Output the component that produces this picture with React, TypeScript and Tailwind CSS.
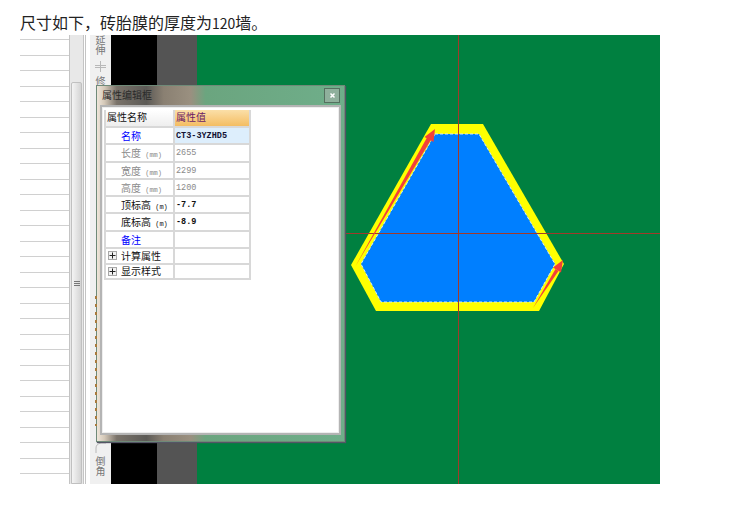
const rows = [
  { n: "名称", u: "", v: "CT3-3YZHD5", c: "text-[#0000ff]", vc: "font-bold text-[#111133]", bg: "bg-[#ddeefc]" },
  { n: "长度", u: "(mm)", v: "2655", c: "text-[#8a8a8a]", vc: "text-[#8a8a8a]", bg: "bg-white" },
  { n: "宽度", u: "(mm)", v: "2299", c: "text-[#8a8a8a]", vc: "text-[#8a8a8a]", bg: "bg-white" },
  { n: "高度", u: "(mm)", v: "1200", c: "text-[#8a8a8a]", vc: "text-[#8a8a8a]", bg: "bg-white" },
  { n: "顶标高", u: "(m)", v: "-7.7", c: "text-[#111111]", vc: "font-bold text-[#111111]", bg: "bg-white" },
  { n: "底标高", u: "(m)", v: "-8.9", c: "text-[#111111]", vc: "font-bold text-[#111111]", bg: "bg-white" },
  { n: "备注", u: "", v: "", c: "text-[#0000ff]", vc: "", bg: "bg-white" },
];

function Plus() {
  return (
    <span className="flex h-[9px] w-[9px] items-center justify-center border border-[#a8a8a8] bg-[#f2f2f2]">
      <svg width="7" height="7" viewBox="0 0 7 7">
        <path d="M0.5 3.5H6.5M3.5 0.5V6.5" stroke="#222" strokeWidth="1" />
      </svg>
    </span>
  );
}

function Row({ n, u, v, c, vc, bg }: { n: string; u: string; v: string; c: string; vc: string; bg: string }) {
  return (
    <div className="flex h-[17.3px] border-b-2 border-[#d8d8d8]">
      <div className={`w-[69px] shrink-0 border-r-2 border-[#d8d8d8] pl-[15px] text-[10px] leading-[16px] ${c}`}>
        {n}
        {u && <span className="font-['Liberation_Mono',monospace] text-[7px]"> {u}</span>}
      </div>
      <div className={`flex-1 pl-[1px] font-['Liberation_Mono',monospace] text-[8.5px] leading-[16px] ${vc} ${bg}`}>{v}</div>
    </div>
  );
}

function Expand({ n }: { n: string }) {
  return (
    <div className="flex h-[15.5px] border-b-2 border-[#d8d8d8]">
      <div className="flex w-[69px] shrink-0 items-center border-r-2 border-[#d8d8d8] pl-[2px] text-[10px] leading-[14px] text-[#111111]">
        <Plus />
        <span className="ml-[4px]">{n}</span>
      </div>
      <div className="flex-1" />
    </div>
  );
}

function Dialog() {
  return (
    <div className="absolute left-[76px] top-[50px] h-[357px] w-[249px] border border-[#6f8a78] bg-[linear-gradient(90deg,#efe6da_0%,#d4c8b8_3%,#7a736a_8%,#5c5a56_20%,#8a8072_27%,#9a9080_38%,#6ba57f_44%,#6fae8a_100%)] px-[3px] pb-[5px] pt-[1px] shadow-[1px_1px_1px_#556]">
      <div className="absolute left-[-2px] top-[210px] h-[130px] w-[2px] bg-[repeating-linear-gradient(180deg,#a87a3c_0px,#a87a3c_3px,transparent_3px,transparent_8px)]" />
      <div className="flex h-[18px] items-start justify-between pl-[2px]">
        <span className="text-[10px] leading-[16px] text-[#2a2a2a]">属性编辑框</span>
        <span className="mr-[1px] mt-[1px] flex h-[15px] w-[16px] items-center justify-center border border-[#55705f] bg-[#8fb09c]">
          <svg width="7" height="7" viewBox="0 0 7 7">
            <path d="M1.5 1.5L5.5 5.5M5.5 1.5L1.5 5.5" stroke="#ffffff" strokeWidth="1.5" />
          </svg>
        </span>
      </div>
      <div className="h-[330px] border-2 border-[#b4b4b4] bg-white pl-[2px] pt-[3px] shadow-[inset_0_0_0_1px_#eeeeee]">
        <div className="w-[147px] border-l-2 border-r-2 border-[#d8d8d8]">
          <div className="flex h-[18px] border-b-2 border-[#d8d8d8]">
            <div className="w-[69px] shrink-0 border-r-2 border-[#d8d8d8] bg-[linear-gradient(180deg,#ffffff,#eeeeee)] pl-[1px] text-[10px] leading-[14px] text-[#111111]">属性名称</div>
            <div className="flex-1 bg-[linear-gradient(180deg,#fbdfa8,#f4bd62)] pl-[1px] text-[10px] leading-[14px] text-[#6b1a66]">属性值</div>
          </div>
          {rows.map((r) => (
            <Row key={r.n} {...r} />
          ))}
          <Expand n="计算属性" />
          <Expand n="显示样式" />
        </div>
      </div>
    </div>
  );
}

function Drawing() {
  return (
    <svg className="absolute left-0 top-0" width="463" height="449" viewBox="197 35 463 449">
      <polygon points="431,124 483,124 564,264 539,311 376,311 351,265" fill="#ffff00" />
      <polygon points="435,134 479,134 555,264 534,302 381,302 361,264" fill="#007fff" />
      <path d="M435,134H479L555,264L534,302H381L361,264Z" fill="none" stroke="#cfe6ff" strokeWidth="1" strokeDasharray="3 2" />
      <rect x="458" y="35" width="1" height="449" fill="#a03a2a" />
      <rect x="197" y="233" width="463" height="1" fill="#a03a2a" />
      <polygon points="355,267 427,137.5 431,139.7" fill="#f2403a" />
      <polygon points="435,129 433.5,142 424.5,137" fill="#f2403a" />
      <polygon points="533,308 555.5,269 558.5,271" fill="#f2403a" />
      <polygon points="563,260 561,272.6 553,267.4" fill="#f2403a" />
    </svg>
  );
}

export default function App() {
  return (
    <div className="h-[512px] w-[744px] overflow-hidden bg-white font-['Noto_Sans_CJK_SC',sans-serif]">
      <p className="h-[35px] overflow-hidden pl-[20px] pt-[11px] text-[16px] leading-[22px] text-[#222222]">
        尺寸如下，砖胎膜的厚度为<span className="text-[14px]">120</span>墙。
      </p>
      <div className="relative ml-[20px] flex h-[449px] w-[640px]">
        <div className="w-[49px] shrink-0 overflow-hidden pt-[4px]">
          {Array.from({ length: 29 }, (_, i) => (
            <div key={i} className="h-[15.5px] border-t border-[#d0d0d0]" />
          ))}
        </div>
        <div className="relative w-[15px] shrink-0 border-l border-r border-[#c4c4c4] bg-[#e8e8e8]">
          <div className="absolute left-[1px] right-[1px] top-[47px] bottom-0 flex items-center justify-center rounded-t-[2px] border border-[#c0c0c0] bg-[linear-gradient(90deg,#f4f4f4,#d4d4d4)]">
            <span className="h-[5px] w-[6px] border-y border-[#777777] bg-[linear-gradient(180deg,transparent_40%,#777777_40%,#777777_60%,transparent_60%)]" />
          </div>
        </div>
        <div className="w-[1px] shrink-0 bg-white" />
        <div className="w-[1px] shrink-0 bg-[#c4c4c4]" />
        <div className="w-[4px] shrink-0 bg-white" />
        <div className="flex w-[21px] shrink-0 flex-col items-center bg-[#f0f0f0] text-[10px] leading-[10px] text-[#777777]">
          <span className="w-[10px] break-all">延伸</span>
          <svg className="mt-[5px]" width="13" height="13" viewBox="0 0 13 13">
            <path d="M1 5.5H12M1 7.5H12M6.5 1V12" stroke="#b8b8b8" strokeWidth="1" />
          </svg>
          <span className="mt-[3px]">修</span>
          <div className="mt-auto flex flex-col items-center pb-[8px]">
            <svg width="12" height="12" viewBox="0 0 12 12">
              <path d="M1 11V6Q1 2 6 1H11" fill="none" stroke="#b8b8b8" strokeWidth="1" />
            </svg>
            <span className="mt-[2px] w-[10px] break-all">倒角</span>
          </div>
        </div>
        <div className="w-[46px] shrink-0 bg-black" />
        <div className="w-[40px] shrink-0 bg-[#545454]" />
        <div className="relative flex-1 bg-[#008040]" />
        <div className="pointer-events-none absolute left-[177px] top-0 h-[449px] w-[463px]">
          <Drawing />
        </div>
        <Dialog />
      </div>
    </div>
  );
}
